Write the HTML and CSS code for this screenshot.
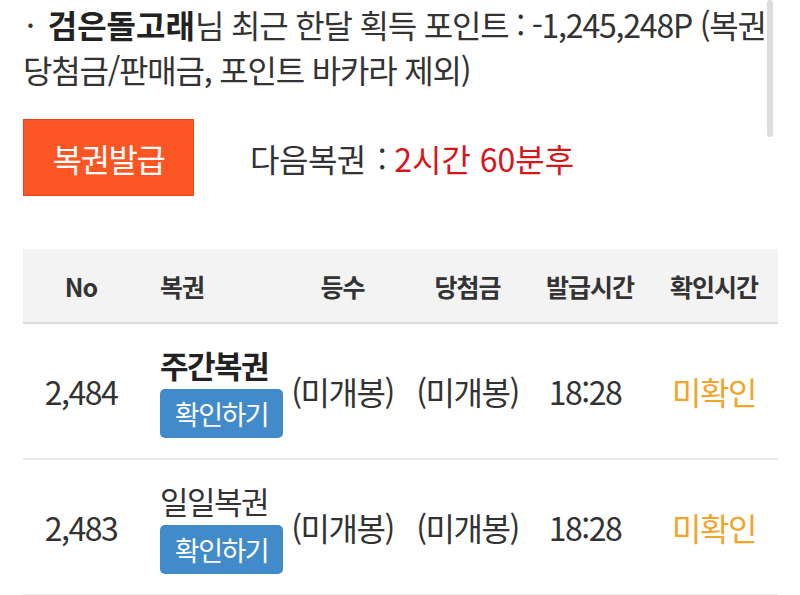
FILE: index.html
```html
<!DOCTYPE html>
<html lang="ko">
<head>
<meta charset="utf-8">
<link rel="stylesheet" href="styles.css">
</head>
<body>
<div class="page">
  <p class="summary"><span class="dot">·</span><b>검은돌고래</b>님 최근 한달 획득 포인트 : -1,245,248P (복권 당첨금/판매금, 포인트 바카라 제외)</p>
  <div class="issue-row">
    <button class="btn-issue">복권발급</button>
    <span class="next">다음복권<span class="colon">:</span><span class="red">2시간 60분후</span></span>
  </div>
  <div class="table">
    <div class="thead">
      <div class="c c1">No</div>
      <div class="c c2">복권</div>
      <div class="c c3">등수</div>
      <div class="c c4">당첨금</div>
      <div class="c c5">발급시간</div>
      <div class="c c6">확인시간</div>
    </div>
    <div class="row">
      <div class="c c1">2,484</div>
      <div class="c c2"><div class="kind bold">주간복권</div><button class="btn-check">확인하기</button></div>
      <div class="c c3">(미개봉)</div>
      <div class="c c4">(미개봉)</div>
      <div class="c c5 time">18:28</div>
      <div class="c c6 warn">미확인</div>
    </div>
    <div class="row">
      <div class="c c1">2,483</div>
      <div class="c c2"><div class="kind">일일복권</div><button class="btn-check">확인하기</button></div>
      <div class="c c3">(미개봉)</div>
      <div class="c c4">(미개봉)</div>
      <div class="c c5 time">18:28</div>
      <div class="c c6 warn">미확인</div>
    </div>
  </div>
</div>
<div class="scrollbar"></div>
</body>
</html>
```
FILE: styles.css
```css
html, body { margin: 0; padding: 0; background: #fff; }
body {
  font-family: "Noto Sans CJK KR", "Noto Sans", sans-serif;
  color: #333;
  overflow: hidden;
  height: 595px;
}
.page { padding: 0 22px 0 23px; }
.summary {
  margin: 0;
  padding-top: 2px;
  font-size: 32px;
  line-height: 45px;
  letter-spacing: -1.2px;
}
.dot { padding: 0 14px 0 3px; }
.summary b { font-weight: 700; color: #222; letter-spacing: 0; }
.issue-row {
  display: flex;
  align-items: center;
  margin-top: 27px;
  gap: 56px;
}
.btn-issue {
  width: 171px;
  height: 77px;
  background: #fc5524;
  border: 1px solid #e04a1c;
  color: #fff;
  font-family: inherit;
  font-size: 32px;
  letter-spacing: -1.5px;
  padding: 0;
}
.next { font-size: 32px; letter-spacing: -0.5px; }
.colon { padding: 0 8px 0 12px; }
.red { color: #d7161a; letter-spacing: 0; }
.table { margin-top: 53px; width: 755px; }
.thead, .row {
  display: grid;
  grid-template-columns: 120px 137px 125px 125px 120px 128px;
  align-items: center;
}
.thead {
  background: #f3f3f3;
  height: 73px;
  border-bottom: 2px solid #dedede;
  font-weight: 700;
  font-size: 25px;
  letter-spacing: -1px;
}
.row {
  height: 134px;
  border-bottom: 2px solid #e8e8e8;
  font-size: 32px;
  letter-spacing: -1.5px;
}
.c { text-align: center; }
.c1 { padding-right: 4px; }
.c2 { text-align: left; padding-left: 17px; }
.time { padding-right: 10px; }
.kind { line-height: 40px; font-size: 31px; }
.kind.bold { font-weight: 700; color: #222; }
.btn-check {
  display: block;
  margin-top: 4px;
  width: 123px;
  height: 49px;
  background: #428bca;
  border: 0;
  border-radius: 5px;
  color: #fff;
  font-family: inherit;
  font-size: 27px;
  letter-spacing: -1.5px;
  padding: 0;
}
.warn { color: #f0a52a; }
.scrollbar {
  position: absolute;
  left: 767px;
  top: 0;
  width: 6px;
  height: 137px;
  background: #dcdcdc;
  border-radius: 3px;
}
```
